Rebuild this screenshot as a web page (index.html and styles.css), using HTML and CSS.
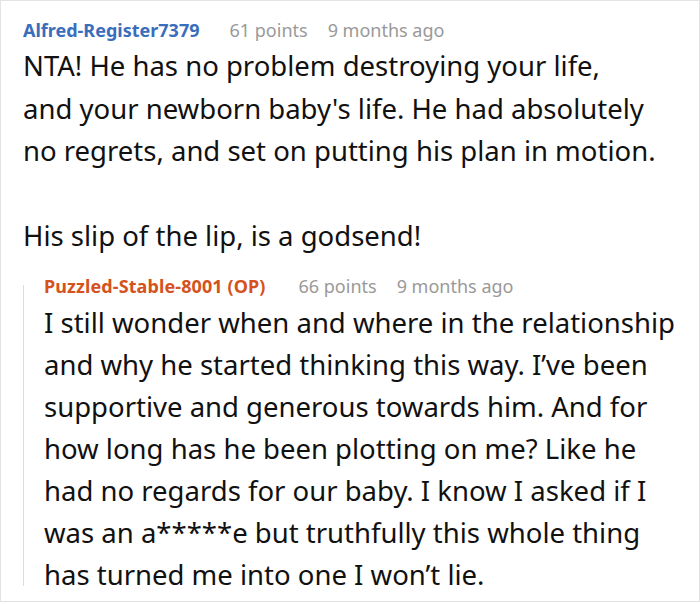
FILE: index.html
```html
<!DOCTYPE html>
<html>
<head>
<meta charset="utf-8">
<link rel="stylesheet" href="styles.css">
</head>
<body>
<div class="frame">
  <div class="comment">
    <div class="meta">
      <span class="author">Alfred-Register7379</span>
      <span class="info">61 points</span>
      <span class="info">9 months ago</span>
    </div>
    <div class="body main-body">
      <p>NTA! He has no problem destroying your life,<br>and your newborn baby's life. He had absolutely no regrets, and set on putting his plan in motion.</p>
      <p>His slip of the lip, is a godsend!</p>
    </div>
    <div class="reply">
      <div class="meta">
        <span class="author op">Puzzled-Stable-8001 (OP)</span>
        <span class="info">66 points</span>
        <span class="info">9 months ago</span>
      </div>
      <div class="body">
        <p>I still wonder when and where in the relationship and why he started thinking this way. I’ve been supportive and generous towards him. And for how long has he been plotting on me? Like he had no regards for our baby. I know I asked if I was an a*****e but truthfully this whole thing has turned me into one I won’t lie.</p>
      </div>
    </div>
  </div>
</div>
</body>
</html>
```
FILE: styles.css
```css
html, body {
  margin: 0;
  padding: 0;
  background: #fff;
}
body {
  font-family: "Noto Sans", "Open Sans", sans-serif;
  color: #111;
}
.frame {
  width: 700px;
  height: 602px;
  box-sizing: border-box;
  border: 1px solid #e3e3e3;
  overflow: hidden;
}
.comment {
  padding: 16px 8px 0 22px;
}
.meta {
  display: flex;
  gap: 20px;
  font-size: 18px;
  line-height: 26px;
  white-space: nowrap;
}
.author {
  font-weight: 700;
  color: #3a6dbb;
  margin-right: 10px;
}
.author.op {
  color: #d5521c;
  margin-right: 13px;
  letter-spacing: 0.1px;
}
.info {
  color: #999;
}
.body {
  font-size: 27.5px;
  line-height: 42.5px;
  margin-top: 2px;
}
.main-body {
  margin-right: 20px;
}
.body p {
  margin: 0 0 42.5px 0;
}
.body p:last-child {
  margin-bottom: 0;
}
.reply {
  position: relative;
  margin-top: 15px;
  padding-left: 21px;
}
.reply::before {
  content: "";
  position: absolute;
  left: 0;
  top: 12px;
  bottom: 10px;
  width: 1px;
  background: #dcdcdc;
}
.reply .body {
  line-height: 42px;
  margin-top: 3px;
}
```
